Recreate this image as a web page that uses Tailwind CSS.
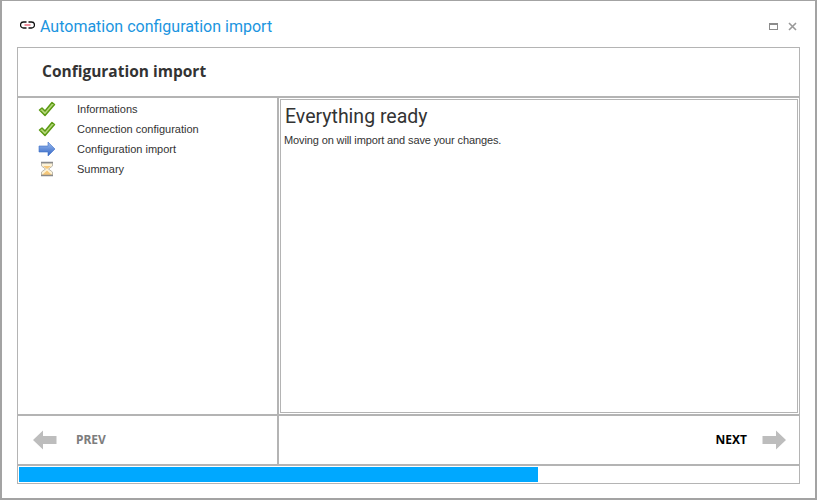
<!DOCTYPE html>
<html lang="en">
<head>
  <meta charset="UTF-8" />
  <title>Automation configuration import</title>
  <script src="https://cdn.jsdelivr.net/npm/@tailwindcss/browser@4"></script>
</head>
<body class="bg-white">
  <div class="w-[817px] h-[500px] border-2 border-[#a3a3a3] border-t border-l-2 bg-white flex flex-col font-['Liberation_Sans',sans-serif] overflow-hidden">

    <!-- title bar -->
    <div class="h-[46px] shrink-0 flex items-center pl-[18px] pr-[18px]">
      <svg width="15" height="8" viewBox="0 0 15 8" class="mr-[5px] mb-[-1px]" fill="none">
        <path d="M6.500 1H3.500a3 3 0 0 0 0 6h3M8.500 1h3a3 3 0 0 1 0 6h-3" stroke="#111" stroke-width="1.300" />
        <path d="M4.500 4h6" stroke="#e0203c" stroke-width="1" />
      </svg>
      <span class="text-[16px] leading-none text-[#1b95e0] mt-[6px] font-['Roboto',sans-serif]">Automation configuration import</span>
      <div class="ml-auto flex items-center gap-[10px] mt-[4px]">
        <div class="w-[9px] h-[7px] border border-t-2 border-[#8c8c8c]"></div>
        <svg width="9" height="9" viewBox="0 0 9 9"><path d="M1 1l7 7M8 1l-7 7" stroke="#999" stroke-width="1.600" /></svg>
      </div>
    </div>

    <!-- main panel -->
    <div class="w-[783px] h-[437px] ml-[15px] border border-[#b4b4b4] flex flex-col">
      <div class="h-[50px] shrink-0 flex items-center pl-[24px] border-b-2 border-[#b4b4b4]">
        <h1 class="text-[15.500px] font-bold text-[#333] mt-[-1px] font-['Open_Sans',sans-serif]">Configuration import</h1>
      </div>

      <div class="h-[318px] shrink-0 flex border-b-2 border-[#b4b4b4]">
        <!-- steps -->
        <div class="w-[261px] shrink-0 border-r-2 border-[#b4b4b4] pt-[1px]">
          <div class="h-[20px] flex items-center pl-[20px]">
            <svg width="18" height="16" viewBox="0 0 18 16" class="mr-[21px]"><path d="M1.500 9l2.500-2 3 3 7-8.500 2.500 2-9.500 11z" fill="#b5d67a" stroke="#5c9a14" stroke-width="1.500" stroke-linejoin="round" /></svg>
            <span class="text-[11px] text-[#333]">Informations</span>
          </div>
          <div class="h-[20px] flex items-center pl-[20px]">
            <svg width="18" height="16" viewBox="0 0 18 16" class="mr-[21px]"><path d="M1.500 9l2.500-2 3 3 7-8.500 2.500 2-9.500 11z" fill="#b5d67a" stroke="#5c9a14" stroke-width="1.500" stroke-linejoin="round" /></svg>
            <span class="text-[11px] text-[#333]">Connection configuration</span>
          </div>
          <div class="h-[20px] flex items-center pl-[20px]">
            <svg width="18" height="16" viewBox="0 0 18 16" class="mr-[21px]">
              <defs><linearGradient id="blue" x1="0" y1="0" x2="0" y2="1"><stop offset="0" stop-color="#9dbdf0" /><stop offset="1" stop-color="#2f63c4" /></linearGradient></defs>
              <path d="M1 5h9V1l7 7-7 7v-4H1z" fill="url(#blue)" stroke="#3e6fc8" stroke-width="0.600" />
            </svg>
            <span class="text-[11px] text-[#333]">Configuration import</span>
          </div>
          <div class="h-[20px] flex items-center pl-[20px]">
            <svg width="18" height="16" viewBox="0 0 18 16" class="mr-[21px]">
              <path d="M3.500 2h11v3L10.500 8l4 3v3h-11v-3l4-3-4-3z" fill="#fdf3d8" stroke="#bdb9ae" />
              <path d="M4 14l5-4.500 5 4.500zM5 5h8L9 8z" fill="#f5c77a" />
              <path d="M3 1.500h12M3 14.500h12" stroke="#8a8a8a" stroke-width="1.400" />
            </svg>
            <span class="text-[11px] text-[#333]">Summary</span>
          </div>
        </div>

        <!-- content -->
        <div class="flex-1 p-[1px]">
          <div class="h-full border border-[#b4b4b4] pl-[4px] pt-[3px]">
            <h2 class="text-[19.500px] leading-[27px] text-[#333] font-['Roboto',sans-serif]">Everything ready</h2>
            <p class="text-[11px] leading-[14px] mt-[3px] -ml-[1px] tracking-[-0.120px] text-[#333]">Moving on will import and save your changes.</p>
          </div>
        </div>
      </div>

      <!-- prev / next -->
      <div class="h-[50px] shrink-0 flex border-b-2 border-[#b4b4b4] font-['Noto_Sans',sans-serif]">
        <div class="w-[261px] shrink-0 border-r-2 border-[#b4b4b4] flex items-center pl-[15px]">
          <svg width="24" height="20" viewBox="0 0 24 20" class="mr-[19px]"><path d="M0 10l10-9.500V6h13.500v8H10v5.500z" fill="#bdbdbd" /></svg>
          <span class="text-[12px] font-bold text-[#7d7d7d]">PREV</span>
        </div>
        <div class="flex-1 flex items-center justify-end pr-[13px]">
          <span class="text-[12px] font-bold text-[#000] mr-[15px]">NEXT</span>
          <svg width="24" height="20" viewBox="0 0 24 20"><path d="M24 10l-10-9.500V6H0.500v8H14v5.500z" fill="#bdbdbd" /></svg>
        </div>
      </div>

      <!-- progress -->
      <div class="flex-1 p-[1px]">
        <div class="h-full w-[519px] bg-[#00a8ff]"></div>
      </div>
    </div>
  </div>
</body>
</html>
